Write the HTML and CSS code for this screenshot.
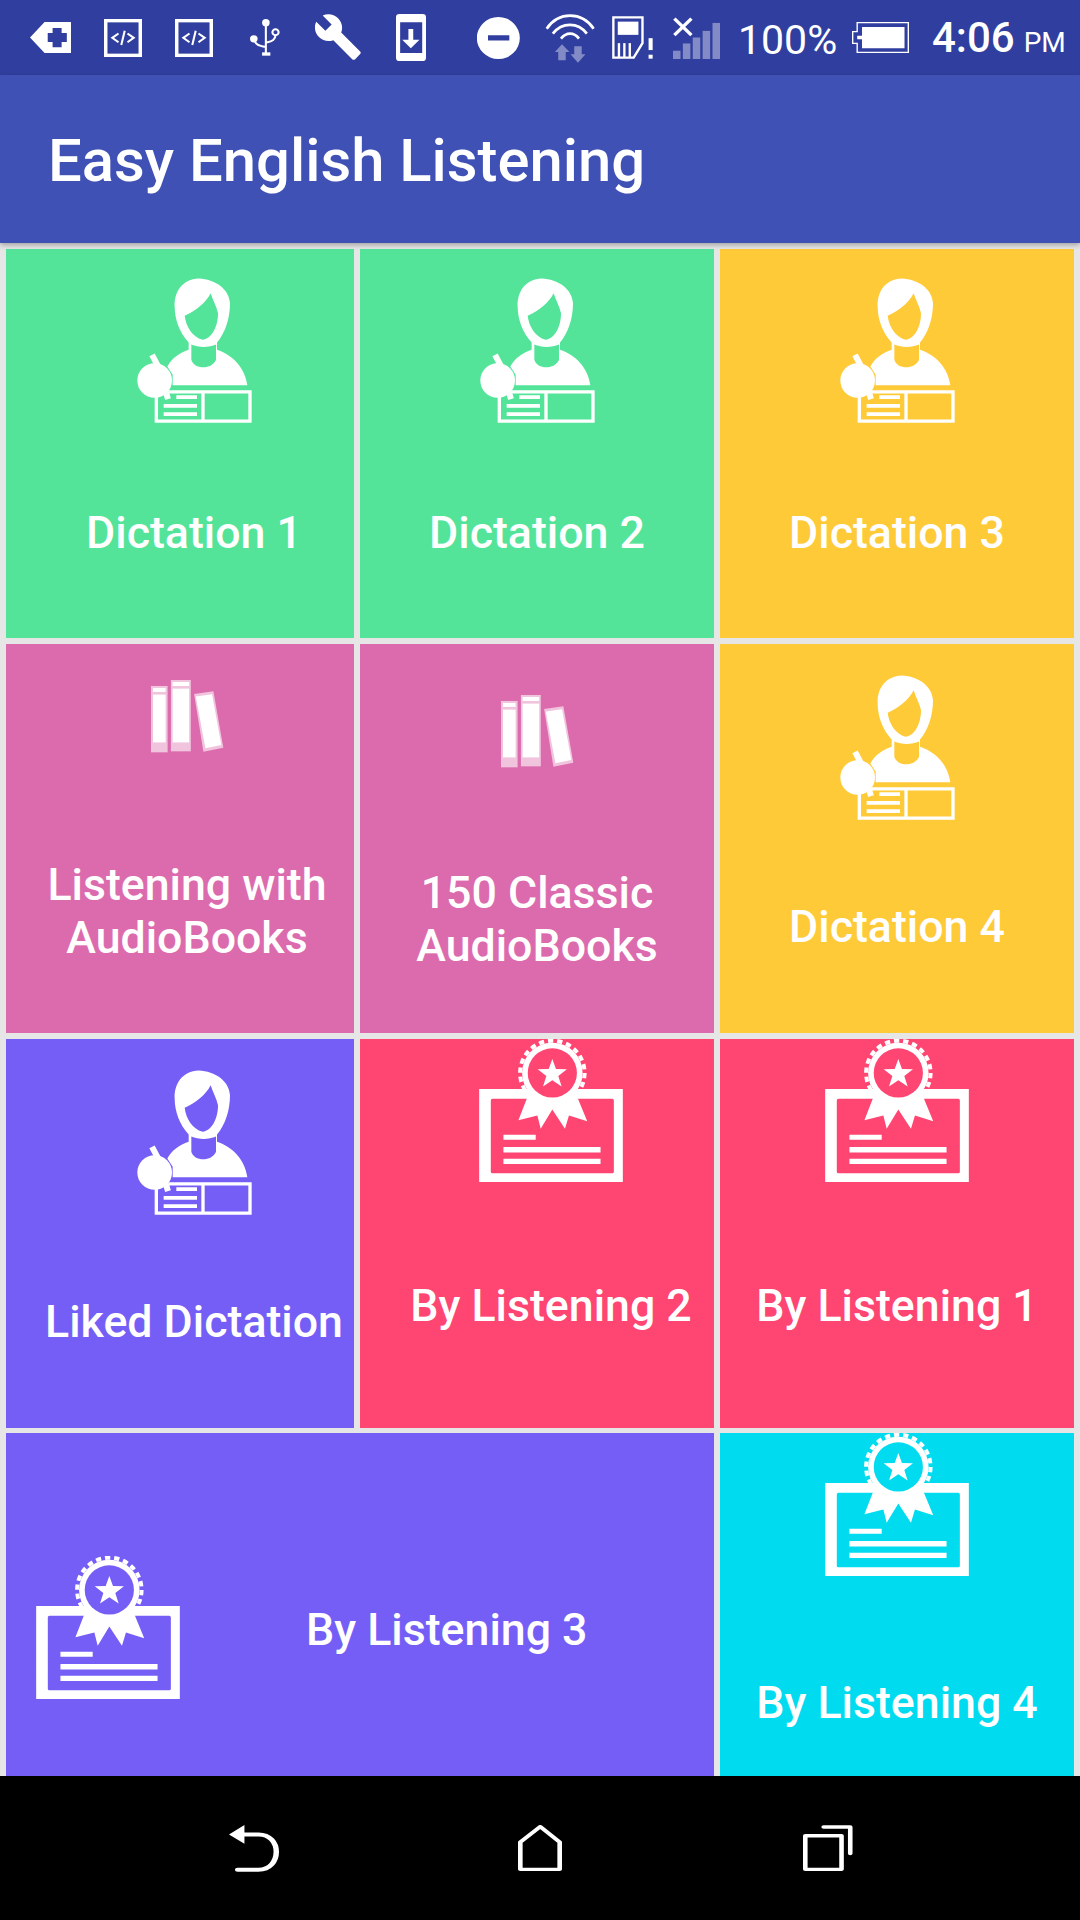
FILE: index.html
```html
<!DOCTYPE html>
<html lang="en">
<head>
<meta charset="utf-8">
<title>Easy English Listening</title>
<link rel="stylesheet" href="styles.css">
</head>
<body>
<svg class="defs" xmlns="http://www.w3.org/2000/svg">
  <symbol id="person" viewBox="85 55 345 437">
    <path fill="#fff" fill-rule="evenodd" d="M270 56C222 58 196 95 198 140C198 178 212 218 240 248V270C212 280 190 295 176 320L192 345V376H416C408 322 372 286 325 270V248C350 218 364 175 364 130C362 88 320 58 270 56ZM306 100C290 130 262 152 228 168C232 200 250 232 282 240C310 235 328 200 328 160C324 140 312 120 306 100ZM248 254V300C256 330 310 330 322 300V254C300 264 270 264 248 254Z"/>
    <circle cx="138" cy="362" r="52" fill="#fff"/>
    <path stroke="#fff" stroke-width="18" fill="none" d="M130 285L154 330M168 385L178 418"/>
    <path stroke="#fff" stroke-width="10" fill="none" d="M143 400V484H424V396H180M283 396V484"/>
    <path stroke="#fff" stroke-width="11" fill="none" d="M203 412H265M165 438H265M165 463H265"/>
  </symbol>
  <symbol id="books" viewBox="62 60 220 220">
    <g fill="#fff" fill-opacity=".6">
      <rect x="62" y="78" width="50" height="200"/>
      <rect x="122" y="60" width="60" height="215"/>
      <path d="M192 102L250 94L280 264L220 276Z"/>
    </g>
    <g fill="#fff">
      <rect x="68" y="84" width="38" height="12"/>
      <rect x="68" y="104" width="38" height="144"/>
      <rect x="127" y="66" width="50" height="12"/>
      <rect x="127" y="86" width="50" height="162"/>
      <path d="M197 110L246 103L274 256L226 266Z"/>
    </g>
  </symbol>
  <symbol id="cert" viewBox="60 28 432 430">
    <path fill="#fff" fill-rule="evenodd" d="M60 178H492V458H60ZM100 208Q95 208 95 213V427Q95 432 100 432H460Q465 432 465 427V213Q465 208 460 208ZM133 316V331H230V316ZM133 353V369H425V353ZM133 388V404H425V388Z"/>
    <circle cx="280" cy="130" r="91" fill="#fff"/>
    <circle cx="280" cy="130" r="97" fill="none" stroke="#fff" stroke-width="12" stroke-dasharray="16 11.7"/>
    <path fill="#fff" d="M206 200L178 272L235 258L245 298L280 240L318 298L330 258L385 275L354 200Z"/>
    <circle fill="currentColor" cx="280" cy="130" r="74"/>
    <path fill="#fff" d="M280 88L291 118L324 119L298 139L308 171L280 152L252 171L262 139L236 119L269 118Z"/>
  </symbol>
</svg>

<header class="status">
  <svg class="si si-tag" viewBox="88 66 118 92" preserveAspectRatio="none"><path fill="#fff" fill-rule="evenodd" d="M88 112L130 66H206V158H130ZM153 84V99H139V125H153V141H179V125H194V99H179V84Z"/></svg>
  <svg class="si si-code" viewBox="302 57 110 113" preserveAspectRatio="none"><g fill="none" stroke="#fff"><rect x="307" y="62" width="100" height="103" stroke-width="10"/><path stroke-width="6" d="M344 100L326 113L344 126M370 100L388 113L370 126M362 92L352 134"/></g></svg>
  <svg class="si si-code" viewBox="302 57 110 113" preserveAspectRatio="none"><g fill="none" stroke="#fff"><rect x="307" y="62" width="100" height="103" stroke-width="10"/><path stroke-width="6" d="M344 100L326 113L344 126M370 100L388 113L370 126M362 92L352 134"/></g></svg>
  <svg class="si si-usb" viewBox="730 57 87 112" preserveAspectRatio="none"><g fill="#fff"><circle cx="776" cy="68" r="11"/><circle cx="741" cy="117" r="11"/><rect x="765" y="158" width="24" height="10"/></g><g fill="none" stroke="#fff" stroke-width="6"><path d="M776 68V162M741 117C745 135 755 138 776 142M804 105C804 120 795 124 778 128"/><circle cx="804" cy="97" r="9"/></g></svg>
  <svg class="si si-wrench" viewBox="1 1 22.6 22.6" preserveAspectRatio="none"><path fill="#fff" d="M22.7 19l-9.1-9.1c.9-2.3.4-5-1.5-6.9-2-2-5-2.4-7.4-1.3L9 6 6 9 1.6 4.7C.4 7.1.9 10.1 2.9 12.1c1.9 1.9 4.6 2.4 6.9 1.5l9.1 9.1c.4.4 1 .4 1.4 0l2.3-2.3c.5-.4.5-1.1.1-1.4z"/></svg>
  <svg class="si si-phone" viewBox="1150 43 87 141" preserveAspectRatio="none"><path fill="#fff" fill-rule="evenodd" d="M1160 43H1227Q1237 43 1237 53V174Q1237 184 1227 184H1160Q1150 184 1150 174V53Q1150 43 1160 43ZM1162 68V160H1226V68ZM1186 88H1200V120H1218L1193 146L1168 120H1186Z"/></svg>
  <svg class="si si-dnd" viewBox="1385 50 125 125" preserveAspectRatio="none"><path fill="#fff" fill-rule="evenodd" d="M1447 50A62 62 0 1 1 1447 175A62 62 0 1 1 1447 50ZM1417 104V120H1479V104Z"/></svg>
  <svg class="si si-wifi" viewBox="15 38 150 150" preserveAspectRatio="none"><g fill="none" stroke="#fff" stroke-width="8"><path d="M20 85C55 33 123 33 158 85M38 100C65 65 112 65 138 100M62 115C78 95 100 95 115 115"/></g><g fill="#fff" fill-opacity=".4"><path d="M44 155L65 132L87 155H76V180H54V155Z"/><path d="M101 138H123V162H134L112 187L90 162H101Z"/></g></svg>
  <svg class="si si-sim" viewBox="208 48 124 130" preserveAspectRatio="none"><path fill="none" stroke="#fff" stroke-width="7" d="M212 52H298V130L272 174H212Z"/><g fill="#fff"><rect x="225" y="65" width="61" height="40"/><rect x="225" y="130" width="7" height="42"/><rect x="241" y="130" width="7" height="42"/><rect x="257" y="130" width="7" height="42"/><rect x="316" y="115" width="12" height="36"/><rect x="316" y="165" width="12" height="12"/></g></svg>
  <svg class="si si-signal" viewBox="386 45 138 127" preserveAspectRatio="none"><path stroke="#fff" stroke-width="10" d="M390 50L440 100M440 50L390 100"/><g fill="#fff" fill-opacity=".4"><rect x="386" y="147" width="22" height="25"/><rect x="415" y="125" width="22" height="47"/><rect x="444" y="107" width="22" height="65"/><rect x="473" y="87" width="22" height="85"/><rect x="502" y="63" width="22" height="109"/></g></svg>
  <span class="pct">100%</span>
  <svg class="si si-batt" viewBox="906 66 165 93" preserveAspectRatio="none"><path fill="none" stroke="#fff" stroke-width="4" d="M921 68H1069V157H921V130H908V95H921Z"/><path fill="#fff" d="M935 81H1058V145H935V118H921V107H935Z"/></svg>
  <span class="clock">4:06<span class="ampm">PM</span></span>
</header>

<div class="appbar"><h1 class="title">Easy English Listening</h1></div>

<main class="grid">
  <a class="tile green shift">
    <svg class="ic person"><use href="#person"/></svg>
    <span class="label m83">Dictation 1</span>
  </a>
  <a class="tile green">
    <svg class="ic person"><use href="#person"/></svg>
    <span class="label m83">Dictation 2</span>
  </a>
  <a class="tile yellow">
    <svg class="ic person"><use href="#person"/></svg>
    <span class="label m83">Dictation 3</span>
  </a>
  <a class="tile pink shift-s">
    <svg class="ic book b1"><use href="#books"/></svg>
    <span class="label m106">Listening with<br>AudioBooks</span>
  </a>
  <a class="tile pink">
    <svg class="ic book b2"><use href="#books"/></svg>
    <span class="label m99">150 Classic<br>AudioBooks</span>
  </a>
  <a class="tile yellow">
    <svg class="ic person p2"><use href="#person"/></svg>
    <span class="label m80">Dictation 4</span>
  </a>
  <a class="tile violet shift">
    <svg class="ic person p2"><use href="#person"/></svg>
    <span class="label m80">Liked Dictation</span>
  </a>
  <a class="tile red shift">
    <svg class="ic cert"><use href="#cert"/></svg>
    <span class="label m98">By Listening 2</span>
  </a>
  <a class="tile red">
    <svg class="ic cert"><use href="#cert"/></svg>
    <span class="label m98">By Listening 1</span>
  </a>
  <a class="tile violet wide">
    <svg class="ic cert"><use href="#cert"/></svg>
    <span class="label wide-label">By Listening 3</span>
  </a>
  <a class="tile cyan">
    <svg class="ic cert"><use href="#cert"/></svg>
    <span class="label m101">By Listening 4</span>
  </a>
</main>

<nav class="nav">
  <svg class="ni ni-back" viewBox="103 192 110 140" preserveAspectRatio="none"><path fill="#fff" d="M103 220L137 192V248Z"/><path fill="none" stroke="#fff" stroke-width="12" stroke-linecap="round" d="M130 220H168C193 220 207 245 207 272C207 300 193 325 168 325H122"/></svg>
  <svg class="ni ni-home" viewBox="737 195 95 137" preserveAspectRatio="none"><path fill="none" stroke="#fff" stroke-width="10" stroke-linejoin="round" d="M742 327V246L785 200L827 246V327Z"/></svg>
  <svg class="ni ni-rec" viewBox="1357 195 109 137" preserveAspectRatio="none"><g fill="none" stroke="#fff" stroke-width="10" stroke-linejoin="round" stroke-linecap="round"><rect x="1362" y="227" width="79" height="100"/><path d="M1402 201H1460V280"/></g></svg>
</nav>
</body>
</html>
```
FILE: styles.css
```css
* { box-sizing: border-box; }
html, body { margin: 0; padding: 0; }
body {
  width: 1080px;
  height: 1920px;
  overflow: hidden;
  display: flex;
  flex-direction: column;
  background: #e6e6e6;
  font-family: Roboto, "Noto Sans", sans-serif;
  color: #fff;
}
.defs { display: none; }

/* status bar */
.status {
  height: 75px;
  flex: none;
  background: #303f9f;
  display: flex;
  align-items: center;
  padding-left: 30px;
}
.si { display: block; flex: none; }
.si-tag { width: 41px; height: 31px; }
.si-code { width: 38px; height: 38px; margin-left: 33px; }
.si-usb { width: 30px; height: 37px; margin-left: 37px; }
.si-wrench { width: 47px; height: 47px; margin-left: 35px; }
.si-phone { width: 30px; height: 47px; margin-left: 34px; }
.si-dnd { width: 43px; height: 42px; margin-left: 51px; }
.si-wifi { width: 51px; height: 50px; margin-left: 25px; }
.si-sim { width: 42px; height: 43px; margin-left: 16px; }
.si-signal { width: 47px; height: 42px; margin-left: 19px; }
.pct {
  margin-left: 18px;
  margin-top: 4px;
  font-size: 41px;
  font-weight: 400;
  line-height: 50px;
  width: 100px;
}
.si-batt { width: 57px; height: 31px; margin-left: 14px; }
.clock {
  margin-left: 23px;
  margin-top: 6px;
  font-size: 42px;
  font-weight: 500;
  line-height: 50px;
  white-space: nowrap;
}
.ampm { font-size: 28px; font-weight: 400; margin-left: 9px; }

/* app bar */
.appbar {
  height: 168px;
  flex: none;
  background: #3f51b5;
  display: flex;
  align-items: center;
  padding-left: 48px;
  padding-top: 3px;
  position: relative;
  box-shadow: 0 2px 5px rgba(0, 0, 0, .3);
}
.title { margin: 0; font-size: 59.8px; font-weight: 500; line-height: 70px; }

/* grid */
.grid {
  flex: 1;
  min-height: 0;
  overflow: hidden;
  display: grid;
  grid-template-columns: 348px 354px 354px;
  grid-auto-rows: 389px;
  column-gap: 6px;
  row-gap: 5.75px;
  padding: 6px 6px 0;
  align-content: start;
}
.tile {
  display: flex;
  flex-direction: column;
  align-items: center;
  overflow: hidden;
}
.shift { padding-left: 28px; }
.shift-s { padding-left: 14px; }
.green { background: #53e49a; }
.yellow { background: #ffca38; }
.pink { background: #dc6bad; }
.violet { background: #745ef6; }
.red { background: #ff4571; }
.cyan { background: #00dbf0; }
.red .ic { color: #ff4571; }
.violet .ic { color: #745ef6; }
.cyan .ic { color: #00dbf0; }

.ic { display: block; flex: none; filter: blur(.7px); }
.person { width: 115px; height: 146px; margin-top: 29px; }
.p2 { margin-top: 31px; }
.book { width: 73px; height: 73px; }
.b1 { margin-top: 36px; }
.b2 { margin-top: 51px; }
.cert { width: 144px; height: 143px; }

.label {
  color: #fff;
  font-size: 44.7px;
  font-weight: 500;
  line-height: 53px;
  text-align: center;
  white-space: nowrap;
}
.m80 { margin-top: 80px; }
.m83 { margin-top: 83px; }
.m98 { margin-top: 98px; }
.m99 { margin-top: 99px; }
.m101 { margin-top: 101px; }
.m106 { margin-top: 106px; }

.wide {
  grid-column: span 2;
  flex-direction: row;
  padding-left: 30px;
}
.wide-label { margin-left: 126px; margin-top: 6px; }

/* navigation bar */
.nav {
  height: 144px;
  flex: none;
  background: #000;
  display: flex;
  align-items: center;
  padding-left: 229px;
  position: relative;
}
.ni { display: block; flex: none; }
.ni-back { width: 50px; height: 47px; }
.ni-home { width: 44px; height: 46px; margin-left: 239px; }
.ni-rec { width: 50px; height: 46px; margin-left: 241px; }
```
